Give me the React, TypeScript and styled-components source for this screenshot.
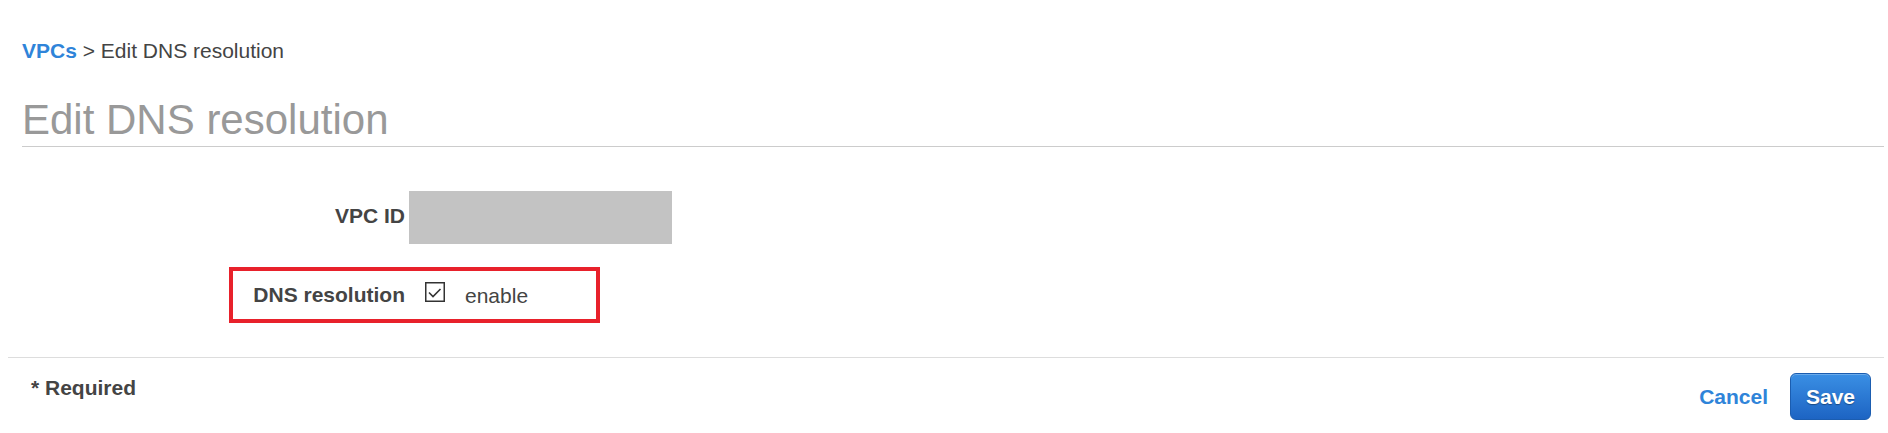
import { FC } from 'react';
import styled, { createGlobalStyle } from 'styled-components';

const GlobalStyle = createGlobalStyle`
  body {
    margin: 0;
    background: #fff;
    font-family: 'Liberation Sans', Arial, sans-serif;
    color: #444;
  }
`;

const Page = styled.div`
  width: 1888px;
  height: 433px;
  overflow: hidden;
  padding-top: 36px;
  box-sizing: border-box;
`;

const Header = styled.div`
  margin: 0 4px 0 22px;
  padding-bottom: 1px;
  border-bottom: 1px solid #ccc;
`;

const Breadcrumb = styled.div`
  font-size: 21px;
  line-height: 30px;
  color: #444;
`;

const CrumbLink = styled.a`
  color: #2f84d9;
  font-weight: 700;
  text-decoration: none;
`;

const Title = styled.h1`
  margin: 29px 0 0;
  font-size: 42px;
  line-height: 50px;
  font-weight: 400;
  color: #999;
`;

const Form = styled.div`
  display: flex;
  flex-direction: column;
  gap: 19px;
  padding: 40px 0 34px 229px;
`;

const Row = styled.div<{ $highlight?: boolean; $gap: number }>`
  display: flex;
  align-items: center;
  gap: ${(p) => p.$gap}px;
  width: ${(p) => (p.$highlight ? '371px' : 'auto')};
  height: ${(p) => (p.$highlight ? '56px' : 'auto')};
  box-sizing: border-box;
  border: 4px solid ${(p) => (p.$highlight ? '#e8212b' : 'transparent')};
`;

const Label = styled.div<{ $lift?: number }>`
  width: 172px;
  text-align: right;
  font-size: 21px;
  line-height: 26px;
  font-weight: 700;
  color: #444;
  padding-bottom: ${(p) => p.$lift ?? 0}px;
`;

const Masked = styled.div`
  width: 263px;
  height: 53px;
  background: #c3c3c3;
`;

const CheckWrap = styled.label`
  display: flex;
  align-items: center;
  gap: 20px;
  font-size: 21px;
  line-height: 26px;
  color: #444;
`;

const CheckBox = styled.svg`
  display: block;
  width: 20px;
  height: 20px;
  margin-bottom: 7px;
`;

const CheckText = styled.span`
  padding-top: 2px;
`;

const Footer = styled.div`
  margin: 0 4px 0 8px;
  border-top: 1px solid #ddd;
  padding: 15px 13px 0 23px;
  display: flex;
  justify-content: space-between;
  align-items: flex-start;
`;

const Required = styled.div`
  font-size: 21px;
  line-height: 30px;
  font-weight: 700;
  color: #444;
`;

const Actions = styled.div`
  display: flex;
  align-items: center;
  gap: 22px;
`;

const CancelLink = styled.a`
  font-size: 21px;
  font-weight: 700;
  color: #2f84d9;
  text-decoration: none;
`;

const SaveButton = styled.button`
  width: 81px;
  height: 47px;
  border: 1px solid #1b5db0;
  border-radius: 6px;
  background: linear-gradient(#3a8fe4, #1d64c3);
  box-shadow: inset 0 1px 0 rgba(255, 255, 255, 0.25);
  color: #fff;
  font-family: 'Liberation Sans', Arial, sans-serif;
  font-size: 21px;
  font-weight: 700;
  text-shadow: 0 1px 1px rgba(0, 0, 0, 0.35);
  padding: 0;
`;

const App: FC = () => {
  return (
    <Page>
      <GlobalStyle />
      <Header>
        <Breadcrumb>
          <CrumbLink href="#">VPCs</CrumbLink> &gt; Edit DNS resolution
        </Breadcrumb>
        <Title>Edit DNS resolution</Title>
      </Header>
      <Form>
        <Row $gap={4}>
          <Label $lift={3}>VPC ID</Label>
          <Masked />
        </Row>
        <Row $highlight $gap={20}>
          <Label>DNS resolution</Label>
          <CheckWrap>
            <CheckBox viewBox="0 0 20 20">
              <rect x="0.75" y="0.75" width="18.5" height="18.5" fill="#fff" stroke="#333" strokeWidth="1.5" />
              <polyline points="4,10.5 8,14.5 15.5,7" fill="none" stroke="#333" strokeWidth="1.6" />
            </CheckBox>
            <CheckText>enable</CheckText>
          </CheckWrap>
        </Row>
      </Form>
      <Footer>
        <Required>* Required</Required>
        <Actions>
          <CancelLink href="#">Cancel</CancelLink>
          <SaveButton>Save</SaveButton>
        </Actions>
      </Footer>
    </Page>
  );
};

export default App;
